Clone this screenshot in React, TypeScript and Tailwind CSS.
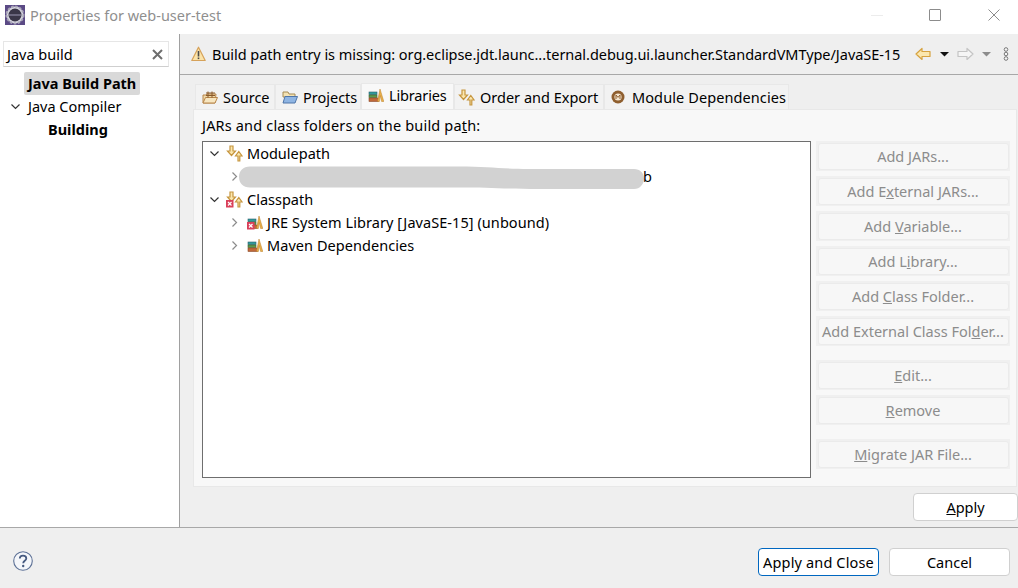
import type { ReactNode } from "react";

function EclipseIcon() {
  return (
    <svg width="20" height="20" viewBox="0 0 20 20" className="ml-[5px] shrink-0">
      <rect x="0" y="0" width="20" height="20" fill="#5b4a85" />
      <circle cx="10" cy="10" r="8.5" fill="#d8d8e0" stroke="#a9a6b8" strokeWidth="2" strokeDasharray="2.5 1.5" />
      <circle cx="10" cy="10" r="6.5" fill="#3a3648" />
      <rect x="4" y="9.2" width="12" height="1.6" fill="#77738a" />
    </svg>
  );
}

function WarningIcon() {
  return (
    <svg width="15" height="16" viewBox="0 0 15 16" className="shrink-0">
      <path d="M7.5 1.2 14.2 14.5H0.8Z" fill="#fbe3a8" stroke="#d6a25a" strokeWidth="1.2" strokeLinejoin="round" />
      <rect x="6.7" y="5" width="1.6" height="5.5" fill="#4a4a4a" />
      <rect x="6.7" y="11.5" width="1.6" height="1.6" fill="#4a4a4a" />
    </svg>
  );
}

function SourceIcon() {
  return (
    <svg width="16" height="14" viewBox="0 0 16 14" className="shrink-0">
      <path d="M1 5h3l1-1h9l-1 9H1Z" fill="#f0d9a8" stroke="#b8864b" />
      <path d="M1 13 3.5 7.5H15.5L13 13Z" fill="#f7e6c0" stroke="#b8864b" />
      <path d="M6 1.5v6M10 1.5v6M4 3h9M4 5.5h9" stroke="#8a5a2b" fill="none" />
    </svg>
  );
}

function ProjectsIcon() {
  return (
    <svg width="16" height="14" viewBox="0 0 16 14" className="shrink-0">
      <path d="M1 2h5l1 2h6v3H1Z" fill="#f3e2b3" stroke="#a58a55" />
      <path d="M1 13 3 6.5h12.5L13 13Z" fill="#8fb5e3" stroke="#4f75a8" />
    </svg>
  );
}

function LibraryIcon({ broken = false }: { broken?: boolean }) {
  return (
    <svg width="16" height="15" viewBox="0 0 16 15" className="shrink-0">
      <rect x="1" y="4" width="8" height="2.6" fill="#2f9a9a" stroke="#2b5f6f" strokeWidth="0.6" />
      <rect x="1" y="7" width="8" height="2.6" fill="#5f9a4a" stroke="#3a5f2f" strokeWidth="0.6" />
      <rect x="1" y="10" width="9.5" height="3.5" fill="#c0683a" stroke="#8a4a2a" strokeWidth="0.6" />
      <path d="M9.5 13.5 12 1 15.8 13.5h-2.2L12.2 7.5 11.4 13.5Z" fill="#eab04a" stroke="#b87f2a" strokeWidth="0.5" />
      {broken && (
        <g>
          <rect x="0" y="7" width="7.5" height="7.5" fill="#d9405a" />
          <path d="M2 9l3.5 3.5M5.5 9 2 12.5" stroke="#fff" strokeWidth="1.2" />
        </g>
      )}
    </svg>
  );
}

function OrderIcon({ broken = false }: { broken?: boolean }) {
  return (
    <svg width="17" height="17" viewBox="0 0 17 17" className="shrink-0">
      <path d="M4 1h3v5h2.5L5.5 10.5 1.5 6H4Z" fill="#fbe7ae" stroke="#c6963f" strokeWidth="1.2" />
      <path d="M12 16V11H9.5L12.8 6.5 16 11h-2.2v5Z" fill="#fbe7ae" stroke="#c6963f" strokeWidth="1.2" />
      {broken && (
        <g>
          <rect x="0" y="9" width="7.5" height="7.5" fill="#d9405a" />
          <path d="M2 11l3.5 3.5M5.5 11 2 14.5" stroke="#fff" strokeWidth="1.2" />
        </g>
      )}
    </svg>
  );
}

function ModuleIcon() {
  return (
    <svg width="14" height="14" viewBox="0 0 14 14" className="shrink-0">
      <circle cx="7" cy="7" r="6.5" fill="#8f5f2f" />
      <circle cx="7" cy="7" r="3.6" fill="#f4e6d0" />
      <path d="M5 9V5l2 2.4L9 5v4" stroke="#8f5f2f" strokeWidth="1" fill="none" />
    </svg>
  );
}

function Chevron({ open, light = false }: { open: boolean; light?: boolean }) {
  const stroke = light ? "#8c8c8c" : "#333333";
  return (
    <svg width="9" height="9" viewBox="0 0 9 9" className="shrink-0">
      {open ? (
        <path d="M0.5 2.5 4.5 6.5 8.5 2.5" stroke={stroke} strokeWidth="1.2" fill="none" />
      ) : (
        <path d="M2.5 0.5 6.5 4.5 2.5 8.5" stroke={stroke} strokeWidth="1.2" fill="none" />
      )}
    </svg>
  );
}

function Tab({
  icon,
  label,
  className,
  active = false,
}: {
  icon: ReactNode;
  label: string;
  className: string;
  active?: boolean;
}) {
  return (
    <div
      className={
        active
          ? `${className} -mb-px flex h-[27px] items-center border-x border-t border-[#e8e8e8] bg-[#f8f8f8] pb-[4px] text-black`
          : `${className} flex h-[25px] items-center border-x border-t border-[#e8e8e8] bg-[#f2f2f2] text-black`
      }
    >
      {icon}
      <span>{label}</span>
    </div>
  );
}

function SideButton({ children, className = "" }: { children: ReactNode; className?: string }) {
  return (
    <div className={`h-[30px] w-[194px] bg-[#f0f0f0] p-[1.5px] ${className}`}>
      <div className="flex h-full items-center justify-center rounded-[3px] border border-[#ebebeb] bg-[#f7f7f7] text-[#8c8c8c]">
        <span>{children}</span>
      </div>
    </div>
  );
}

function ActionButton({
  children,
  width,
  primary = false,
}: {
  children: ReactNode;
  width: string;
  primary?: boolean;
}) {
  return (
    <div
      className={`${width} flex h-[28px] items-center justify-center rounded-[4px] border bg-white text-black ${
        primary ? "border-[#0067c0] tracking-[0.15px]" : "border-[#d0d0d0]"
      }`}
    >
      <span>{children}</span>
    </div>
  );
}

export default function App() {
  return (
    <div className="flex h-[588px] w-[1018px] flex-col overflow-hidden bg-white font-['Noto_Sans',sans-serif] text-[14.5px] leading-none">
      {/* title bar */}
      <div className="flex h-[34px] shrink-0 items-center bg-white pb-[4px]">
        <EclipseIcon />
        <span className="ml-[5px] text-[#8f8f8f]">Properties for web-user-test</span>
        <div className="ml-auto flex items-center">
          <div className="h-px w-[12px] bg-[#ececec]" />
          <div className="ml-[46px] h-[12px] w-[12px] rounded-[1px] border border-[#8c8c8c]" />
          <svg width="12" height="12" viewBox="0 0 12 12" className="ml-[47px] mr-[18px]">
            <path d="M0.5 0.5 11.5 11.5M11.5 0.5 0.5 11.5" stroke="#8c8c8c" strokeWidth="1" />
          </svg>
        </div>
      </div>

      <div className="flex h-[494px] shrink-0 border-b border-[#a8a8a8]">
        {/* left nav */}
        <div className="w-[180px] shrink-0 border-r border-[#a0a0a0] bg-white pl-[3px] pt-[7px]">
          <div className="flex h-[26px] w-[166px] items-center justify-between border border-[#e6e6e6] border-b-[#cfcfcf] pl-[3px] pr-[5px] text-black">
            <span>Java build</span>
            <svg width="11" height="11" viewBox="0 0 11 11">
              <path d="M1 1 10 10M10 1 1 10" stroke="#6e6e6e" strokeWidth="2" />
            </svg>
          </div>
          <div className="ml-[21px] mt-[5px] flex h-[23px] w-[116px] items-center rounded-[2px] bg-[#d9d9d9] pl-[4px] font-bold text-black">
            Java Build Path
          </div>
          <div className="ml-[8px] flex h-[23px] items-center gap-[8px] text-black">
            <Chevron open />
            <span>Java Compiler</span>
          </div>
          <div className="ml-[45px] flex h-[23px] items-center font-bold text-black">Building</div>
        </div>

        {/* right pane */}
        <div className="flex min-w-0 flex-1 flex-col bg-[#efefef]">
          <div className="flex h-[41px] shrink-0 items-center border-b border-[#a8a8a8] pl-[11px] text-black">
            <WarningIcon />
            <span className="ml-[6px] whitespace-nowrap tracking-[-0.04px]">
              Build path entry is missing: org.eclipse.jdt.launc...ternal.debug.ui.launcher.StandardVMType/JavaSE-15
            </span>
            <svg width="95" height="16" viewBox="0 0 95 16" className="ml-auto mr-[8px] shrink-0">
              <path d="M1 8 7 2.5V5.5H15V10.5H7V13.5Z" fill="#fbe7ae" stroke="#d6a23f" strokeWidth="1.2" strokeLinejoin="round" />
              <path d="M25 6h9l-4.5 4.5Z" fill="#111111" />
              <path d="M58 8 52 2.5V5.5H43V10.5H52V13.5Z" fill="#f5f5f5" stroke="#c4c4c4" strokeWidth="1.2" strokeLinejoin="round" />
              <path d="M67 6h9l-4.5 4.5Z" fill="#8c8c8c" />
              <circle cx="91" cy="3.5" r="1.8" fill="#f5f5f5" stroke="#777777" />
              <circle cx="91" cy="8" r="1.8" fill="#f5f5f5" stroke="#777777" />
              <circle cx="91" cy="12.5" r="1.8" fill="#f5f5f5" stroke="#777777" />
            </svg>
          </div>

          <div className="ml-[13px] mr-px mt-[7px] flex h-[27px] shrink-0 items-end pl-[2px]">
            <Tab icon={<SourceIcon />} label="Source" className="w-[80px] gap-[5px] pl-[6px]" />
            <Tab icon={<ProjectsIcon />} label="Projects" className="w-[86px] gap-[5px] pl-[6px]" />
            <Tab icon={<LibraryIcon />} label="Libraries" className="w-[93px] gap-[5px] pl-[6px] tracking-[-0.15px]" active />
            <Tab icon={<OrderIcon />} label="Order and Export" className="w-[150px] gap-[5px] pl-[3px]" />
            <Tab icon={<ModuleIcon />} label="Module Dependencies" className="w-[185px] gap-[7px] pl-[6px] tracking-[0.1px]" />
          </div>

          <div className="ml-[13px] mr-px flex h-[378px] shrink-0 flex-col border border-[#e8e8e8] bg-[#f8f8f8] pl-[8px]">
            <div className="flex h-[31px] shrink-0 items-center pb-[1px] text-black">
              <span className="tracking-[0.17px]">
                JARs and class folders on the build pa<u>t</u>h:
              </span>
            </div>
            <div className="flex">
              <div className="h-[337px] w-[609px] shrink-0 border border-[#6e6e6e] bg-white text-black">
                <div className="flex h-[23px] items-center pl-[7px]">
                  <Chevron open />
                  <div className="ml-[7px]"><OrderIcon /></div>
                  <span className="ml-[4px]">Modulepath</span>
                </div>
                <div className="flex h-[23px] items-center pl-[27px]">
                  <Chevron open={false} light />
                  {/* redacted file name in the original */}
                  <svg width="405" height="24" viewBox="0 0 405 24" className="shrink-0">
                    <path
                      d="M11 1.5H220C250 1.5 262 4 290 4H395C401 4 405 8 405 13.5S401 24 395 24H300C270 24 250 22.5 220 22.5H11C4 22.5 0 18 0 12S4 1.5 11 1.5Z"
                      fill="#d2d2d2"
                    />
                  </svg>
                  <span className="-ml-px">b</span>
                </div>
                <div className="flex h-[23px] items-center pl-[7px]">
                  <Chevron open />
                  <div className="ml-[7px]"><OrderIcon broken /></div>
                  <span className="ml-[4px]">Classpath</span>
                </div>
                <div className="flex h-[23px] items-center pl-[27px]">
                  <Chevron open={false} light />
                  <div className="ml-[8px]"><LibraryIcon broken /></div>
                  <span className="ml-[4px] tracking-[0.06px]">JRE System Library [JavaSE-15] (unbound)</span>
                </div>
                <div className="flex h-[23px] items-center pl-[27px]">
                  <Chevron open={false} light />
                  <div className="ml-[8px]"><LibraryIcon /></div>
                  <span className="ml-[4px] tracking-[0.06px]">Maven Dependencies</span>
                </div>
              </div>

              <div className="ml-[5px] flex flex-col gap-[5px]">
                <SideButton>Add <u>J</u>ARs...</SideButton>
                <SideButton>Add E<u>x</u>ternal JARs...</SideButton>
                <SideButton>Add <u>V</u>ariable...</SideButton>
                <SideButton>Add L<u>i</u>brary...</SideButton>
                <SideButton>Add <u>C</u>lass Folder...</SideButton>
                <SideButton>Add External Class Fol<u>d</u>er...</SideButton>
                <SideButton className="mt-[9px]"><u>E</u>dit...</SideButton>
                <SideButton><u>R</u>emove</SideButton>
                <SideButton className="mt-[9px]"><u>M</u>igrate JAR File...</SideButton>
              </div>
            </div>
          </div>

          <div className="mt-[6px] flex justify-end">
            <ActionButton width="w-[105px]"><u>A</u>pply</ActionButton>
          </div>
        </div>
      </div>

      {/* footer */}
      <div className="flex min-h-0 flex-1 items-start bg-[#efefef] pl-[13px] pt-[20px]">
        <svg width="20" height="20" viewBox="0 0 20 20" className="mt-[3px] shrink-0">
          <circle cx="10" cy="10" r="9.3" fill="#f4f6fa" stroke="#5d7196" strokeWidth="1.1" />
          <path d="M6.8 7.6C6.8 5.6 8.3 4.6 10 4.6s3.3 1 3.3 2.8c0 2.4-3.1 2.4-3.1 4.8" stroke="#465a80" strokeWidth="1.8" fill="none" />
          <circle cx="10.2" cy="15" r="1.2" fill="#465a80" />
        </svg>
        <div className="ml-auto mr-[8px] flex gap-[10px]">
          <ActionButton width="w-[121px]" primary>Apply and Close</ActionButton>
          <ActionButton width="w-[121px]">Cancel</ActionButton>
        </div>
      </div>
    </div>
  );
}
